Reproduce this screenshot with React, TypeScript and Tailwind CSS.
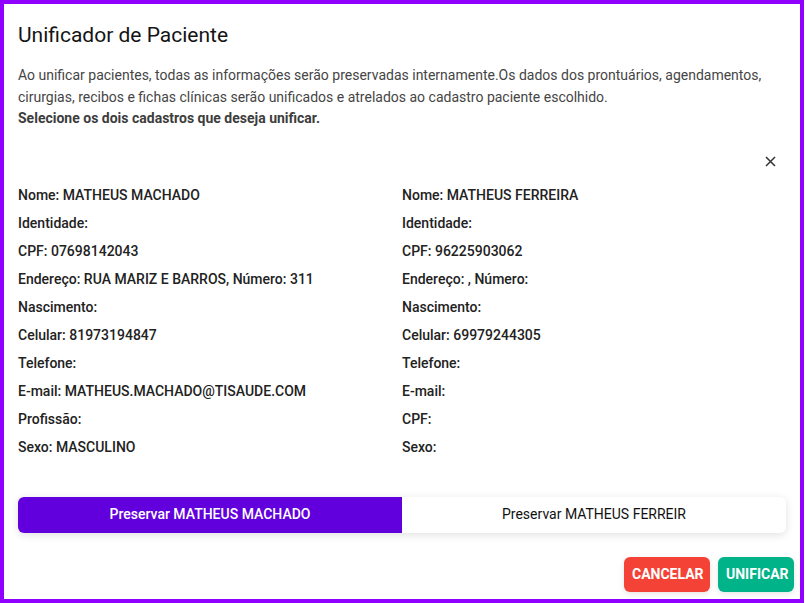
import { useState } from 'react';

const left = [
    'Nome: MATHEUS MACHADO',
    'Identidade:',
    'CPF: 07698142043',
    'Endereço: RUA MARIZ E BARROS, Número: 311',
    'Nascimento:',
    'Celular: 81973194847',
    'Telefone:',
    'E-mail: MATHEUS.MACHADO@TISAUDE.COM',
    'Profissão:',
    'Sexo: MASCULINO',
];

const right = [
    'Nome: MATHEUS FERREIRA',
    'Identidade:',
    'CPF: 96225903062',
    'Endereço: , Número:',
    'Nascimento:',
    'Celular: 69979244305',
    'Telefone:',
    'E-mail:',
    'CPF:',
    'Sexo:',
];

export default function App() {
    const [preserve, setPreserve] = useState<'left' | 'right'>('left');

    return (
        <div className="w-[806px] h-[603px] bg-white" style={{ fontFamily: 'Roboto, "Noto Sans", sans-serif' }}>
            <div className="w-[804px] h-[603px] border-4 border-[#9000ff] flex flex-col px-[14px]">
                {/* Header */}
                <h2 className="pt-[15px] text-[21px] leading-[32px] text-[#141414]">Unificador de Paciente</h2>

                <div className="mt-[14px] text-[14px] leading-[21.5px] text-[#454545]">
                    <p>
                        Ao unificar pacientes, todas as informações serão preservadas internamente.Os dados dos prontuários, agendamentos,
                        cirurgias, recibos e fichas clínicas serão unificados e atrelados ao cadastro paciente escolhido.
                    </p>
                    <p className="font-bold text-[#3d3d3d]">Selecione os dois cadastros que deseja unificar.</p>
                </div>

                {/* Close */}
                <div className="flex justify-end w-[768px] mt-[20px] h-[24px] items-center pr-[10px]">
                    <button className="w-[12px] h-[12px] flex items-center justify-center text-[#333]">
                        <svg width="11" height="11" viewBox="0 0 11 11" fill="none" stroke="currentColor" strokeWidth="1.5">
                            <path d="M1 1L10 10M10 1L1 10" />
                        </svg>
                    </button>
                </div>

                {/* Patient data */}
                <div className="grid grid-cols-2 w-[768px] mt-[8px]">
                    <div className="flex flex-col">
                        {left.map((t, i) => (
                            <div key={i} className="h-[28px] flex items-center text-[14px] font-medium text-[#222]">{t}</div>
                        ))}
                    </div>
                    <div className="flex flex-col">
                        {right.map((t, i) => (
                            <div key={i} className="h-[28px] flex items-center text-[14px] font-medium text-[#222]">{t}</div>
                        ))}
                    </div>
                </div>

                {/* Toggle */}
                <div className="mt-[35px] w-[768px] h-[36px] flex rounded-md bg-white shadow-[0_2px_8px_rgba(0,0,0,0.12)] overflow-hidden">
                    <button
                        onClick={() => setPreserve('left')}
                        className={`flex-1 flex items-center justify-center text-[14px] ${preserve === 'left' ? 'bg-[#6200dd] text-white font-medium' : 'text-[#111] font-normal'}`}
                    >
                        Preservar MATHEUS MACHADO
                    </button>
                    <button
                        onClick={() => setPreserve('right')}
                        className={`flex-1 flex items-center justify-center text-[14px] ${preserve === 'right' ? 'bg-[#6200dd] text-white font-medium' : 'text-[#111] font-normal'}`}
                    >
                        Preservar MATHEUS FERREIR
                    </button>
                </div>

                {/* Footer */}
                <div className="mt-[24px] flex justify-end gap-[8px] mr-[-8px]">
                    <button className="h-[35px] px-[8px] w-[86px] rounded-md bg-[#f44336] text-white text-[14px] font-bold shadow-[0_2px_6px_rgba(0,0,0,0.1)]">
                        CANCELAR
                    </button>
                    <button className="h-[35px] px-[8px] w-[76px] rounded-md bg-[#00b389] text-white text-[14px] font-bold shadow-[0_2px_6px_rgba(0,0,0,0.1)]">
                        UNIFICAR
                    </button>
                </div>
            </div>
        </div>
    );
}
